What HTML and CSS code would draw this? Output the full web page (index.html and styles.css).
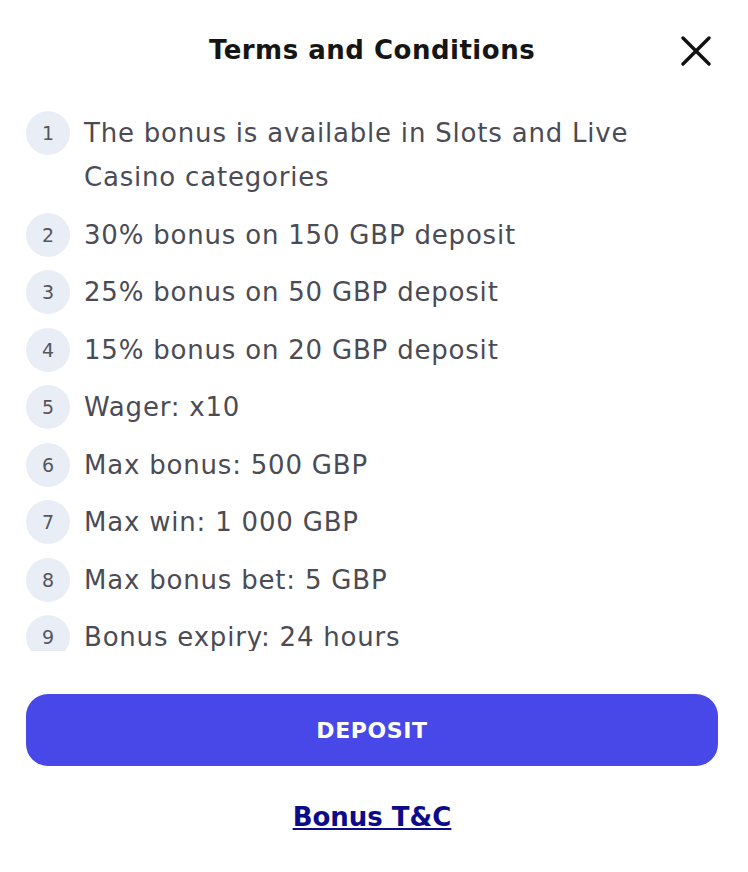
FILE: index.html
```html
<!DOCTYPE html>
<html lang="en">

<head>
    <meta charset="UTF-8">
    <meta name="viewport" content="width=device-width, initial-scale=1.0">
    <title>Terms and Conditions</title>
    <link rel="stylesheet" href="styles.css">
</head>

<body>
    <div class="modal">
        <div class="modal_header">
            <h2>Terms and Conditions</h2>
            <button class="close" type="button" aria-label="Close">
                <svg width="30" height="30" viewBox="0 0 30 30">
                    <path d="M2 2 L28 28 M28 2 L2 28" stroke="#111" stroke-width="3.4" stroke-linecap="round" />
                </svg>
            </button>
        </div>

        <ol class="terms">
            <li><span class="num">1</span><span class="txt">The bonus is available in Slots and Live Casino categories</span></li>
            <li><span class="num">2</span><span class="txt">30% bonus on 150 GBP deposit</span></li>
            <li><span class="num">3</span><span class="txt">25% bonus on 50 GBP deposit</span></li>
            <li><span class="num">4</span><span class="txt">15% bonus on 20 GBP deposit</span></li>
            <li><span class="num">5</span><span class="txt">Wager: x10</span></li>
            <li><span class="num">6</span><span class="txt">Max bonus: 500 GBP</span></li>
            <li><span class="num">7</span><span class="txt">Max win: 1 000 GBP</span></li>
            <li><span class="num">8</span><span class="txt">Max bonus bet: 5 GBP</span></li>
            <li><span class="num">9</span><span class="txt">Bonus expiry: 24 hours</span></li>
        </ol>

        <button class="deposit" type="button">DEPOSIT</button>
        <div class="links">
            <a href="#">Bonus T&amp;C</a>
        </div>
    </div>
</body>

</html>
```

FILE: styles.css
```css
body {
    margin: 0;
    background: #fff;
    font-family: "DejaVu Sans", sans-serif;
    color: #4b4b55;
}

.modal {
    padding: 0 30px 0 26px;
}

.modal_header {
    display: flex;
    align-items: center;
    justify-content: center;
    height: 100px;
    position: relative;
}

.modal_header h2 {
    margin: 0;
    font-size: 26px;
    font-weight: bold;
    letter-spacing: 0.5px;
    color: #151515;
}

.close {
    position: absolute;
    right: 7px;
    top: 36px;
    padding: 0;
    border: none;
    background: none;
    cursor: pointer;
    line-height: 0;
}

.terms {
    list-style: none;
    margin: 11px 0 0;
    padding: 0;
    height: 540px;
    overflow: hidden;
}

.terms li {
    display: flex;
    gap: 14px;
    margin-bottom: 13.5px;
}

.num {
    flex: none;
    width: 44px;
    height: 44px;
    border-radius: 50%;
    background: #e9edf6;
    color: #55555d;
    font-size: 19px;
    display: flex;
    align-items: center;
    justify-content: center;
}

.txt {
    font-size: 26px;
    line-height: 44px;
    letter-spacing: 0.8px;
}

.deposit {
    display: block;
    width: 100%;
    height: 72px;
    margin-top: 43px;
    border: none;
    border-radius: 22px;
    background: #4848e8;
    color: #fff;
    font-family: "DejaVu Sans", sans-serif;
    font-size: 22px;
    font-weight: bold;
    letter-spacing: 0.6px;
    cursor: pointer;
}

.links {
    text-align: center;
    margin-top: 36px;
}

.links a {
    font-size: 26px;
    font-weight: bold;
    color: #0c0c8a;
}
```
